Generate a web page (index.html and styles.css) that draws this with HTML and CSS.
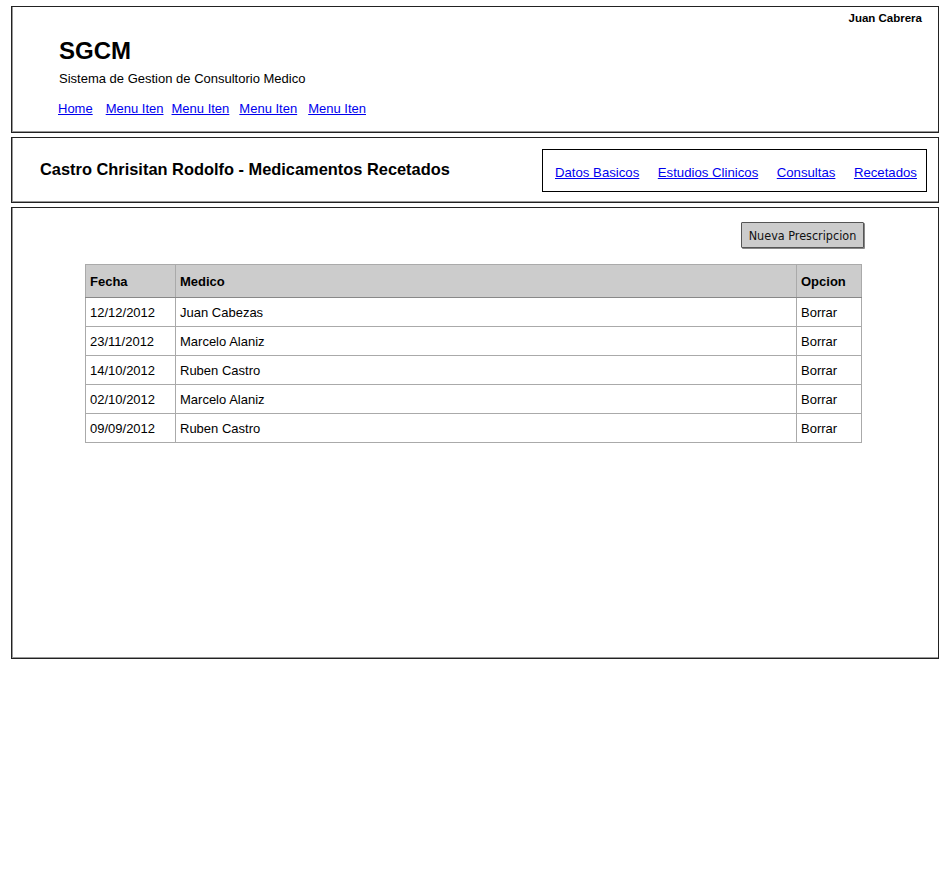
FILE: index.html
```html
<!DOCTYPE html>
<html>
<head>
<meta charset="utf-8">
<link rel="stylesheet" href="styles.css">
</head>
<body>
<div class="page">
  <header class="box top">
    <div class="user">Juan Cabrera</div>
    <h1 class="brand">SGCM</h1>
    <div class="subtitle">Sistema de Gestion de Consultorio Medico</div>
    <nav class="menu">
      <a href="#" class="m-home">Home</a>
      <a href="#" class="m1">Menu Iten</a>
      <a href="#" class="m2">Menu Iten</a>
      <a href="#" class="m3">Menu Iten</a>
      <a href="#" class="m4">Menu Iten</a>
    </nav>
  </header>
  <section class="box patient">
    <h2 class="ptitle">Castro Chrisitan Rodolfo - Medicamentos Recetados</h2>
    <nav class="tabs">
      <a href="#">Datos Basicos</a>
      <a href="#">Estudios Clinicos</a>
      <a href="#">Consultas</a>
      <a href="#">Recetados</a>
    </nav>
  </section>
  <main class="box content">
    <div class="actions"><button class="btn">Nueva Prescripcion</button></div>
    <table class="grid">
      <colgroup><col class="c1"><col class="c2"><col class="c3"></colgroup>
      <thead><tr><th>Fecha</th><th>Medico</th><th>Opcion</th></tr></thead>
      <tbody>
        <tr><td>12/12/2012</td><td>Juan Cabezas</td><td>Borrar</td></tr>
        <tr><td>23/11/2012</td><td>Marcelo Alaniz</td><td>Borrar</td></tr>
        <tr><td>14/10/2012</td><td>Ruben Castro</td><td>Borrar</td></tr>
        <tr><td>02/10/2012</td><td>Marcelo Alaniz</td><td>Borrar</td></tr>
        <tr><td>09/09/2012</td><td>Ruben Castro</td><td>Borrar</td></tr>
      </tbody>
    </table>
  </main>
</div>
</body>
</html>
```
FILE: styles.css
```css
html, body { margin: 0; padding: 0; background: #fff; }
body { font-family: "Liberation Sans", Arial, sans-serif; color: #000; }
.page { padding: 6px 0 0 11px; width: 928px; display: flex; flex-direction: column; gap: 4px; }
.box { border: 1px solid #222; box-sizing: border-box; width: 928px; box-shadow: inset 1px -1px 0 #999; }
.top { height: 127px; position: relative; padding: 0 0 0 47px; }
.user { position: absolute; top: 5px; right: 16px; font-size: 11.5px; font-weight: bold; }
.brand { margin: 0; padding-top: 30px; font-size: 24px; line-height: 28px; font-weight: bold; }
.subtitle { font-size: 13px; line-height: 15px; margin-top: 6px; }
.menu { margin-top: 15px; margin-left: -1px; font-size: 13px; line-height: 15px; display: flex; }
.menu a { color: #00e; text-decoration: underline; }
.m1 { margin-left: 13px; }
.m2 { margin-left: 8px; }
.m3 { margin-left: 10px; }
.m4 { margin-left: 11px; }
.patient { height: 66px; display: flex; align-items: center; justify-content: space-between; padding: 0 11px 0 28px; }
.ptitle { margin: 0; font-size: 16.4px; font-weight: bold; line-height: 20px; position: relative; top: -1px; }
.tabs { border: 1px solid #000; width: 385px; height: 43px; box-sizing: border-box; display: flex; align-items: center; justify-content: space-between; padding: 5px 9px 0 12px; font-size: 13.2px; }
.tabs a { color: #00e; text-decoration: underline; }
.content { height: 452px; padding: 14px 0 0 73px; }
.actions { display: flex; justify-content: flex-end; padding-right: 74px; }
.btn { width: 123px; height: 26px; background: #ccc; border: 1px solid #555; border-radius: 1px; font-family: "DejaVu Sans Condensed", "DejaVu Sans", sans-serif; font-size: 12.5px; color: #111; padding: 0; box-shadow: 1px 1px 0 #888; }
.grid { margin-top: 16px; border-collapse: collapse; width: 777px; font-size: 13px; }
.c1 { width: 90px; }
.c3 { width: 65px; }
.grid th, .grid td { border: 1px solid #aaa; text-align: left; padding: 0 4px; }
.grid th { background: #ccc; height: 32px; font-weight: bold; border-bottom-color: #888; }
.grid td { height: 28px; }
```
